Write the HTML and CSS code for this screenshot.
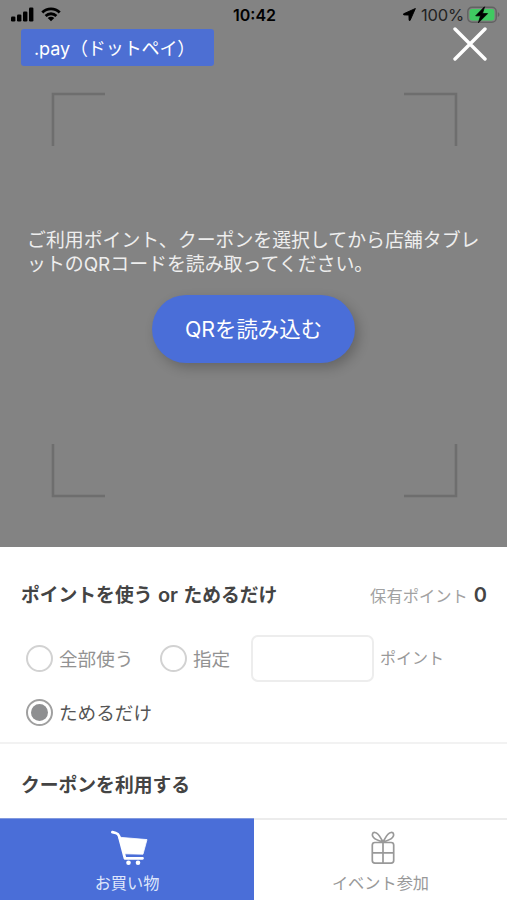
FILE: index.html
```html
<!DOCTYPE html>
<html lang="ja">
<head>
<meta charset="utf-8">
<meta name="viewport" content="width=device-width, initial-scale=1">
<title>.pay（ドットペイ）</title>
<link rel="stylesheet" href="styles.css">
</head>
<body>
<main class="app">
  <section class="camera">
    <svg class="viewfinder" width="407" height="406" viewBox="0 0 407 406" aria-hidden="true">
      <path d="M2 54V2H54M353 2H405V54M405 352V404H353M54 404H2V352"/>
    </svg>
    <div class="status">
      <svg class="signal" width="24" height="16" viewBox="0 0 24 16" aria-hidden="true">
        <rect x="0" y="9.5" width="4.4" height="5" rx="1.2"/>
        <rect x="6" y="7.5" width="4.4" height="7" rx="1.2"/>
        <rect x="12" y="4.5" width="4.4" height="10" rx="1.2"/>
        <rect x="18" y="0.5" width="4.4" height="14" rx="1.2"/>
      </svg>
      <svg class="wifi" width="20" height="15" viewBox="0 0 20 15" aria-hidden="true">
        <path class="wave" d="M1.3 5.5C6.2 .6 13.8 .6 18.7 5.5M4.6 8.9C7.7 6 12.3 6 15.4 8.9"/>
        <path d="M10 14.3L6.7 11C8.5 9.4 11.5 9.4 13.3 11Z"/>
      </svg>
      <span class="clock">10:42</span>
      <svg class="location" width="13" height="13" viewBox="0 0 13 13" aria-hidden="true">
        <path d="M12.4 .5L.6 5.8C.2 6 .3 6.9 .8 6.9L5.9 7.1L6.1 12.2C6.1 12.7 6.9 12.8 7.1 12.4Z"/>
      </svg>
      <span class="percent">100%</span>
      <svg class="battery" width="34" height="18" viewBox="0 0 34 18" aria-hidden="true">
        <rect class="shell" x=".8" y="1.3" width="28.4" height="15" rx="4.3"/>
        <rect class="charge" x="2.6" y="3.1" width="24.8" height="11.4" rx="2.4"/>
        <path class="tip" d="M30.8 6.3C33 7 33 10.2 30.8 11Z"/>
        <path class="bolt" d="M17.5 .8L8.7 9.8H13.6L11.4 16.8L20.6 7.6H15.5Z"/>
      </svg>
    </div>
    <header class="titlebar">
      <h1 class="brand">.pay（ドットペイ）</h1>
      <button class="close" type="button" aria-label="閉じる">
        <svg width="34" height="34" viewBox="0 0 34 34"><path d="M2 2L32 32M32 2L2 32"/></svg>
      </button>
    </header>
    <p class="guide">ご利用ポイント、クーポンを選択してから店舗タブレットのQRコードを読み取ってください。</p>
    <button class="scan" type="button">QRを読み込む</button>
  </section>

  <section class="points">
    <div class="points-head">
      <h2 class="heading">ポイントを使う <span class="or">or</span> ためるだけ</h2>
      <p class="balance">保有ポイント <b class="balance-value">0</b></p>
    </div>
    <div class="options">
      <span class="option option-all"><i class="radio"></i><span class="label">全部使う</span></span>
      <span class="option option-some"><i class="radio"></i><span class="label">指定</span></span>
      <input class="amount" type="text" aria-label="ポイント">
      <span class="unit">ポイント</span>
    </div>
    <div class="options options-save">
      <span class="option selected"><i class="radio"></i><span class="label">ためるだけ</span></span>
    </div>
  </section>

  <section class="coupon">
    <h2 class="heading">クーポンを利用する</h2>
  </section>

  <nav class="tabs">
    <a class="tab active">
      <svg width="38" height="36" viewBox="0 0 38 36" aria-hidden="true">
        <path class="cart-line" d="M2.4 2.2L5.8 3C7.8 3.5 8.6 4.6 9.2 6.4L15 28.3H32.5"/>
        <path class="cart-fill" d="M8.8 7.2L37 9.6L33 24.2L14 23.8Z"/>
        <circle cx="18.5" cy="32.8" r="2.3"/><circle cx="28" cy="32.8" r="2.3"/>
      </svg>
      <span>お買い物</span>
    </a>
    <a class="tab">
      <svg class="gift-icon" width="26" height="36" viewBox="0 0 26 36" aria-hidden="true">
        <rect class="gift" x="2.3" y="12.5" width="21.4" height="20.6" rx="2.6"/>
        <path class="gift" d="M13 12V33M2.3 22.8H23.7M13 11.7C10.8 9 9 3 5 2.5C2 2.2 1.6 5.5 3.5 7.5C5.8 10 9.5 11 13 11.7C15.2 9 17 3 21 2.5C24 2.2 24.4 5.5 22.5 7.5C20.2 10 16.5 11 13 11.7Z"/>
      </svg>
      <span>イベント参加</span>
    </a>
  </nav>
</main>
</body>
</html>
```
FILE: styles.css
```css
* { box-sizing: border-box; }

body {
  margin: 0;
  background: #fff;
  font-family: Inter, "Noto Sans CJK JP", sans-serif;
  color: #444;
}

h1, h2, p { margin: 0; }

button { border: 0; padding: 0; font: inherit; }

.app {
  display: flex;
  flex-direction: column;
  width: 507px;
  height: 900px;
  overflow: hidden;
}

.camera {
  position: relative;
  display: flex;
  flex-direction: column;
  flex: none;
  height: 547px;
  background: #838383;
}

.viewfinder {
  position: absolute;
  top: 92px;
  left: 51px;
  fill: none;
  stroke: #6e6e6e;
  stroke-width: 2.6;
}

.status {
  display: flex;
  align-items: center;
  height: 29px;
  padding-left: 11px;
  color: #000;
}

.signal { margin-top: 1px; }
.wifi { margin-left: 6px; }
.wave { fill: none; stroke: #000; stroke-width: 2.8; }

.clock {
  width: 46px;
  margin-left: 172px;
  font-size: 16px;
  font-weight: 600;
  white-space: nowrap;
}

.location { margin-left: 124px; stroke: #000; stroke-width: .9; }

.percent {
  width: 43px;
  margin-left: 5px;
  color: #222;
  font-size: 16.5px;
  letter-spacing: -.2px;
  white-space: nowrap;
}

.battery { margin-left: 3px; }
.shell { fill: none; stroke: #626262; stroke-width: 1.4; }
.charge { fill: #3fca61; }
.tip { fill: #626262; }
.bolt { stroke: #000; stroke-width: .8; }

.titlebar {
  display: flex;
  justify-content: space-between;
  height: 37px;
  padding: 0 20px 0 21px;
}

.brand {
  width: 193px;
  height: 37px;
  padding-left: 13px;
  border-radius: 3px;
  background: #4d6fd3;
  color: #fff;
  font-size: 18px;
  font-weight: 400;
  line-height: 39px;
  letter-spacing: -.1px;
  white-space: nowrap;
}

.close {
  height: 34px;
  margin-top: -2px;
  background: none;
}

.close path {
  fill: none;
  stroke: #fff;
  stroke-width: 3.4;
  stroke-linecap: round;
}

.guide {
  width: 458px;
  margin: 163px 0 0 27px;
  color: #eee;
  font-size: 18.9px;
  line-height: 24px;
  line-break: anywhere;
}

.scan {
  width: 203px;
  height: 68px;
  margin: 18px 0 0 152px;
  border-radius: 34px;
  background: #4a6ed8;
  box-shadow: 4px 5px 12px rgba(0, 0, 0, .22);
  color: #fff;
  font-size: 21.4px;
  line-height: 69px;
}

.points {
  flex: none;
  height: 197px;
  padding: 33px 20px 0 22px;
  border-bottom: 2px solid #f2f2f2;
}

.points-head {
  display: flex;
  align-items: center;
  justify-content: space-between;
  height: 31px;
}

.heading {
  margin-left: -1px;
  font-size: 18.8px;
  font-weight: 700;
  line-height: 32px;
  white-space: nowrap;
}

.or { margin: 0 1px; font-size: 20px; font-weight: 600; }

.balance {
  display: flex;
  align-items: center;
  gap: 6px;
  margin-top: -2px;
  color: #a2a2a2;
  font-size: 16.3px;
}

.balance-value { color: #444; font-size: 20px; font-weight: 600; }

.options {
  display: flex;
  align-items: center;
  height: 46px;
  margin: 24px 0 0 4px;
}

.options-save { height: 28px; margin-top: 17px; }

.option {
  display: flex;
  align-items: center;
  gap: 6px;
  color: #929292;
  font-size: 18.6px;
  white-space: nowrap;
}

.label { margin-top: -2px; }

.option-all { width: 134px; }
.option-some { width: 91px; }

.radio {
  display: grid;
  place-items: center;
  width: 27px;
  height: 27px;
  border: 2px solid #d2d2d2;
  border-radius: 50%;
}

.selected { color: #555; }
.selected .radio { border-color: #a0a0a0; }

.selected .radio::before {
  content: "";
  width: 17px;
  height: 17px;
  border-radius: 50%;
  background: #8e8f91;
}

.amount {
  width: 123px;
  height: 47px;
  border: 2px solid #ededed;
  border-radius: 7px;
  background: #fff;
}

.unit { margin: -3px 0 0 6px; color: #999; font-size: 16px; }

.coupon {
  flex: none;
  height: 74px;
  padding: 26px 22px 0;
}

.tabs {
  display: grid;
  grid-template-columns: 254px 253px;
  height: 82px;
}

.tab {
  display: flex;
  flex-direction: column;
  align-items: center;
  padding-top: 10px;
  border-top: 2px solid #ececec;
  color: #999;
  font-size: 16.2px;
  line-height: 35px;
  white-space: nowrap;
}

.tab svg { flex: none; }
.gift { fill: none; stroke: #999; stroke-width: 1.7; }
.gift-icon { margin-left: 5px; }

.active {
  padding-top: 11px;
  border-top: 1px solid #8199de;
  background: #4a6ed8;
  color: #dfe6fb;
}

.active svg { fill: #fff; margin-left: 4px; }
.cart-line { fill: none; stroke: #fff; stroke-width: 2.8; stroke-linecap: round; stroke-linejoin: round; }
.cart-fill { fill: #fff; stroke: #fff; stroke-width: .8; stroke-linejoin: round; }
```
